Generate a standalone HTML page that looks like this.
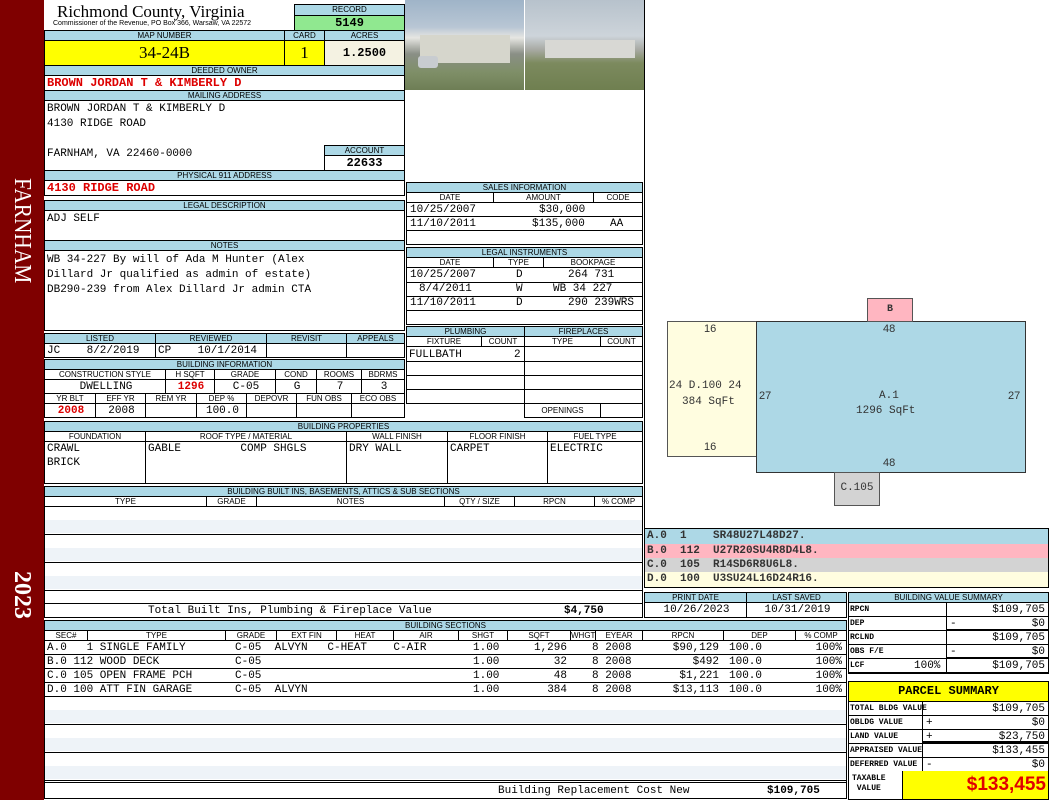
<!DOCTYPE html>
<html><head><meta charset="utf-8"><style>
*{margin:0;padding:0;box-sizing:border-box}
body{width:1050px;height:800px;background:#fff;position:relative;overflow:hidden;font-family:"Liberation Mono",monospace;font-size:11px;color:#000}
.a{position:absolute;border:1px solid #000;overflow:hidden;white-space:nowrap}
.h{background:#acd8e6;font:8px/9px "Liberation Sans",sans-serif;text-align:center}
.m{font:11px/14px "Liberation Mono",monospace;padding-left:2px}
.s{font:8px/9px "Liberation Sans",sans-serif;text-align:center}
.c{text-align:center}.r{text-align:right;padding-right:3px}
.red{color:#d00;font-weight:bold}
.n{position:absolute;white-space:nowrap}
</style></head><body>
<!-- sidebar -->
<div style="position:absolute;left:0;top:0;width:44px;height:800px;background:#7f0000"></div>
<div class="n" style="left:2px;top:178px;width:40px;height:160px;"><div style="transform:rotate(90deg) scaleX(0.89);transform-origin:0 0;position:absolute;left:33px;top:0;font:24px 'Liberation Serif',serif;color:#fff">FARNHAM</div></div>
<div class="n" style="left:2px;top:571px;width:40px;height:60px;"><div style="transform:rotate(90deg);transform-origin:0 0;position:absolute;left:33px;top:0;font:bold 24px 'Liberation Serif',serif;color:#fff">2023</div></div>

<!-- title -->
<div class="n" style="left:57px;top:2px;font:17px 'Liberation Serif',serif">Richmond County, Virginia</div>
<div class="n" style="left:53px;top:20px;font:7px 'Liberation Sans',sans-serif">Commissioner of the Revenue, PO Box 366, Warsaw, VA 22572</div>
<div class="a h" style="left:294px;top:4px;width:111px;height:12px">RECORD</div>
<div class="a c" style="left:294px;top:15px;width:111px;height:16px;background:#90e890;font:bold 12px/14px 'Liberation Mono',monospace">5149</div>

<div class="a h" style="left:44px;top:30px;width:241px;height:11px">MAP NUMBER</div>
<div class="a h" style="left:284px;top:30px;width:41px;height:11px">CARD</div>
<div class="a h" style="left:324px;top:30px;width:81px;height:11px">ACRES</div>
<div class="a c" style="left:44px;top:40px;width:241px;height:26px;background:#ffff00;font:17px/24px 'Liberation Serif',serif">34-24B</div>
<div class="a c" style="left:284px;top:40px;width:41px;height:26px;background:#ffff00;font:17px/24px 'Liberation Serif',serif">1</div>
<div class="a c" style="left:324px;top:40px;width:81px;height:26px;background:#f4f2e2;font:bold 12px/24px 'Liberation Mono',monospace">1.2500</div>

<div class="a h" style="left:44px;top:65px;width:361px;height:11px">DEEDED OWNER</div>
<div class="a m red" style="left:44px;top:75px;width:361px;height:16px;font-size:12px">BROWN JORDAN T &amp; KIMBERLY D</div>
<div class="a h" style="left:44px;top:90px;width:361px;height:11px">MAILING ADDRESS</div>
<div class="a" style="left:44px;top:100px;width:361px;height:71px"></div>
<div class="n m" style="left:45px;top:102px">BROWN JORDAN T &amp; KIMBERLY D</div>
<div class="n m" style="left:45px;top:117px">4130 RIDGE ROAD</div>
<div class="n m" style="left:45px;top:147px">FARNHAM, VA 22460-0000</div>
<div class="a h" style="left:324px;top:145px;width:81px;height:11px">ACCOUNT</div>
<div class="a c" style="left:324px;top:155px;width:81px;height:16px;font:bold 12px/14px 'Liberation Mono',monospace">22633</div>
<div class="a h" style="left:44px;top:170px;width:361px;height:11px">PHYSICAL 911 ADDRESS</div>
<div class="a m red" style="left:44px;top:180px;width:361px;height:16px;font-size:12px">4130 RIDGE ROAD</div>

<div class="a h" style="left:44px;top:200px;width:361px;height:11px">LEGAL DESCRIPTION</div>
<div class="a m" style="left:44px;top:210px;width:361px;height:31px;padding-top:1px">ADJ SELF</div>
<div class="a h" style="left:44px;top:240px;width:361px;height:11px">NOTES</div>
<div class="a m" style="left:44px;top:250px;width:361px;height:81px;padding-top:2px;line-height:15px">WB 34-227 By will of Ada M Hunter (Alex<br>Dillard Jr qualified as admin of estate)<br>DB290-239 from Alex Dillard Jr admin CTA</div>

<!-- listed -->
<div class="a h" style="left:44px;top:333px;width:112px;height:11px">LISTED</div>
<div class="a h" style="left:155px;top:333px;width:112px;height:11px">REVIEWED</div>
<div class="a h" style="left:266px;top:333px;width:81px;height:11px">REVISIT</div>
<div class="a h" style="left:346px;top:333px;width:59px;height:11px">APPEALS</div>
<div class="a m" style="left:44px;top:343px;width:112px;height:15px">JC&nbsp;&nbsp;&nbsp;&nbsp;8/2/2019</div>
<div class="a m" style="left:155px;top:343px;width:112px;height:15px">CP&nbsp;&nbsp;&nbsp;&nbsp;10/1/2014</div>
<div class="a" style="left:266px;top:343px;width:81px;height:15px"></div>
<div class="a" style="left:346px;top:343px;width:59px;height:15px"></div>

<div class="a h" style="left:44px;top:359px;width:361px;height:11px">BUILDING INFORMATION</div>
<div class="a s" style="left:44px;top:369px;width:122px;height:11px">CONSTRUCTION STYLE</div>
<div class="a s" style="left:165px;top:369px;width:50px;height:11px">H SQFT</div>
<div class="a s" style="left:214px;top:369px;width:62px;height:11px">GRADE</div>
<div class="a s" style="left:275px;top:369px;width:42px;height:11px">COND</div>
<div class="a s" style="left:316px;top:369px;width:46px;height:11px">ROOMS</div>
<div class="a s" style="left:361px;top:369px;width:44px;height:11px">BDRMS</div>
<div class="a m c" style="left:44px;top:379px;width:122px;height:15px">DWELLING</div>
<div class="a m c red" style="left:165px;top:379px;width:50px;height:15px">1296</div>
<div class="a m c" style="left:214px;top:379px;width:62px;height:15px">C-05</div>
<div class="a m c" style="left:275px;top:379px;width:42px;height:15px">G</div>
<div class="a m c" style="left:316px;top:379px;width:46px;height:15px">7</div>
<div class="a m c" style="left:361px;top:379px;width:44px;height:15px">3</div>
<div class="a s" style="left:44px;top:393px;width:52px;height:11px">YR BLT</div>
<div class="a s" style="left:95px;top:393px;width:51px;height:11px">EFF YR</div>
<div class="a s" style="left:145px;top:393px;width:52px;height:11px">REM YR</div>
<div class="a s" style="left:196px;top:393px;width:51px;height:11px">DEP %</div>
<div class="a s" style="left:246px;top:393px;width:51px;height:11px">DEPOVR</div>
<div class="a s" style="left:296px;top:393px;width:56px;height:11px">FUN OBS</div>
<div class="a s" style="left:351px;top:393px;width:54px;height:11px">ECO OBS</div>
<div class="a m c red" style="left:44px;top:403px;width:52px;height:15px">2008</div>
<div class="a m c" style="left:95px;top:403px;width:51px;height:15px">2008</div>
<div class="a" style="left:145px;top:403px;width:52px;height:15px"></div>
<div class="a m c" style="left:196px;top:403px;width:51px;height:15px">100.0</div>
<div class="a" style="left:246px;top:403px;width:51px;height:15px"></div>
<div class="a" style="left:296px;top:403px;width:56px;height:15px"></div>
<div class="a" style="left:351px;top:403px;width:54px;height:15px"></div>

<!-- photos -->
<div class="n" style="left:405px;top:0;width:119px;height:90px;background:linear-gradient(#9fb4c8 0,#b8c6d4 30%,#e6e6e2 42%,#8a8f86 60%,#7f8f68 80%,#6e7e55 100%)"></div>
<div class="n" style="left:420px;top:35px;width:90px;height:28px;background:#d6d6cc"></div>
<div class="n" style="left:418px;top:56px;width:20px;height:12px;background:#c8ccd0;border-radius:3px"></div>
<div class="n" style="left:525px;top:0;width:119px;height:90px;background:linear-gradient(#b7c2cc 0,#cdd4da 40%,#a8aaa4 55%,#7c8a5e 70%,#6f7f50 100%)"></div>
<div class="n" style="left:545px;top:40px;width:90px;height:18px;background:#d8d8d4"></div>
<div class="n" style="left:644px;top:0;width:1px;height:530px;background:#000"></div>

<!-- sales -->
<div class="a h" style="left:406px;top:182px;width:237px;height:11px">SALES INFORMATION</div>
<div class="a s" style="left:406px;top:192px;width:88px;height:11px">DATE</div>
<div class="a s" style="left:493px;top:192px;width:101px;height:11px">AMOUNT</div>
<div class="a s" style="left:593px;top:192px;width:50px;height:11px">CODE</div>
<div class="a" style="left:406px;top:202px;width:237px;height:43px"></div>
<div class="n m" style="left:408px;top:203px">10/25/2007</div><div class="n m" style="left:537px;top:203px">$30,000</div>
<div class="n" style="left:407px;top:216px;width:235px;height:1px;background:#000"></div>
<div class="n m" style="left:408px;top:217px">11/10/2011</div><div class="n m" style="left:530px;top:217px">$135,000</div><div class="n m" style="left:608px;top:217px">AA</div>
<div class="n" style="left:407px;top:230px;width:235px;height:1px;background:#000"></div>

<div class="a h" style="left:406px;top:247px;width:237px;height:11px">LEGAL INSTRUMENTS</div>
<div class="a s" style="left:406px;top:257px;width:88px;height:11px">DATE</div>
<div class="a s" style="left:493px;top:257px;width:51px;height:11px">TYPE</div>
<div class="a s" style="left:543px;top:257px;width:100px;height:11px">BOOKPAGE</div>
<div class="a" style="left:406px;top:267px;width:237px;height:58px"></div>
<div class="n m" style="left:408px;top:268px">10/25/2007</div><div class="n m" style="left:514px;top:268px">D</div><div class="n m" style="left:566px;top:268px">264 731</div>
<div class="n" style="left:407px;top:282px;width:235px;height:1px;background:#000"></div>
<div class="n m" style="left:417px;top:282px">8/4/2011</div><div class="n m" style="left:514px;top:282px">W</div><div class="n m" style="left:551px;top:282px">WB 34 227</div>
<div class="n" style="left:407px;top:296px;width:235px;height:1px;background:#000"></div>
<div class="n m" style="left:408px;top:296px">11/10/2011</div><div class="n m" style="left:514px;top:296px">D</div><div class="n m" style="left:566px;top:296px">290 239WRS</div>
<div class="n" style="left:407px;top:310px;width:235px;height:1px;background:#000"></div>

<!-- plumbing/fireplace -->
<div class="a h" style="left:406px;top:326px;width:119px;height:11px">PLUMBING</div>
<div class="a h" style="left:524px;top:326px;width:119px;height:11px">FIREPLACES</div>
<div class="a s" style="left:406px;top:336px;width:76px;height:11px">FIXTURE</div>
<div class="a s" style="left:481px;top:336px;width:44px;height:11px">COUNT</div>
<div class="a s" style="left:524px;top:336px;width:77px;height:11px">TYPE</div>
<div class="a s" style="left:600px;top:336px;width:43px;height:11px">COUNT</div>
<div class="a" style="left:406px;top:346px;width:119px;height:58px"></div>
<div class="n m" style="left:407px;top:348px">FULLBATH</div><div class="n m" style="left:512px;top:348px">2</div>
<div class="n" style="left:407px;top:361px;width:117px;height:1px;background:#000"></div>
<div class="n" style="left:407px;top:375px;width:117px;height:1px;background:#000"></div>
<div class="n" style="left:407px;top:389px;width:117px;height:1px;background:#000"></div>
<div class="a" style="left:524px;top:346px;width:119px;height:58px"></div>
<div class="n" style="left:525px;top:361px;width:117px;height:1px;background:#000"></div>
<div class="n" style="left:525px;top:375px;width:117px;height:1px;background:#000"></div>
<div class="n" style="left:525px;top:389px;width:117px;height:1px;background:#000"></div>
<div class="a s" style="left:524px;top:403px;width:77px;height:15px;line-height:13px">OPENINGS</div>
<div class="a" style="left:600px;top:403px;width:43px;height:15px"></div>

<!-- building properties -->
<div class="a h" style="left:44px;top:421px;width:599px;height:11px">BUILDING PROPERTIES</div>
<div class="a s" style="left:44px;top:431px;width:102px;height:11px">FOUNDATION</div>
<div class="a s" style="left:145px;top:431px;width:202px;height:11px">ROOF TYPE / MATERIAL</div>
<div class="a s" style="left:346px;top:431px;width:102px;height:11px">WALL FINISH</div>
<div class="a s" style="left:447px;top:431px;width:101px;height:11px">FLOOR FINISH</div>
<div class="a s" style="left:547px;top:431px;width:96px;height:11px">FUEL TYPE</div>
<div class="a m" style="left:44px;top:441px;width:102px;height:43px;line-height:14px">CRAWL<br>BRICK</div>
<div class="a m" style="left:145px;top:441px;width:202px;height:43px;line-height:14px">GABLE&nbsp;&nbsp;&nbsp;&nbsp;&nbsp;&nbsp;&nbsp;&nbsp;&nbsp;COMP SHGLS</div>
<div class="a m" style="left:346px;top:441px;width:102px;height:43px;line-height:14px">DRY WALL</div>
<div class="a m" style="left:447px;top:441px;width:101px;height:43px;line-height:14px">CARPET</div>
<div class="a m" style="left:547px;top:441px;width:96px;height:43px;line-height:14px">ELECTRIC</div>

<!-- built ins -->
<div class="a h" style="left:44px;top:486px;width:599px;height:11px">BUILDING BUILT INS, BASEMENTS, ATTICS &amp; SUB SECTIONS</div>
<div class="a s" style="left:44px;top:496px;width:163px;height:11px">TYPE</div>
<div class="a s" style="left:206px;top:496px;width:51px;height:11px">GRADE</div>
<div class="a s" style="left:256px;top:496px;width:189px;height:11px">NOTES</div>
<div class="a s" style="left:444px;top:496px;width:71px;height:11px">QTY / SIZE</div>
<div class="a s" style="left:514px;top:496px;width:81px;height:11px">RPCN</div>
<div class="a s" style="left:594px;top:496px;width:49px;height:11px">% COMP</div>
<div class="a" style="left:44px;top:506px;width:599px;height:112px;background:repeating-linear-gradient(#fff 0,#fff 13px,#000 13px,#000 14px)"></div>
<div class="n" style="left:45px;top:520px;width:597px;height:13px;background:#eef3f8"></div>
<div class="n" style="left:45px;top:548px;width:597px;height:13px;background:#eef3f8"></div>
<div class="n" style="left:45px;top:576px;width:597px;height:13px;background:#eef3f8"></div>
<div class="a" style="left:44px;top:603px;width:599px;height:15px;background:#fff"></div>
<div class="n m" style="left:146px;top:604px">Total Built Ins, Plumbing &amp; Fireplace Value</div>
<div class="n m" style="left:562px;top:604px;font-weight:bold">$4,750</div>

<!-- sketch -->
<div class="n" style="left:667px;top:321px;width:90px;height:136px;background:#fffde0;border:1px solid #555"></div>
<div class="n" style="left:756px;top:321px;width:270px;height:152px;background:#add8e6;border:1px solid #333"></div>
<div class="n" style="left:867px;top:298px;width:46px;height:24px;background:#ffb6c1;border:1px solid #555;font:bold 10px/22px 'Liberation Mono',monospace;text-align:center;color:#333">B</div>
<div class="n" style="left:834px;top:472px;width:46px;height:34px;background:#d3d3d3;border:1px solid #555;font:11px/30px 'Liberation Mono',monospace;text-align:center;color:#333">C.105</div>
<div class="n" style="left:704px;top:323px;font:11px 'Liberation Sans',sans-serif;color:#333">16</div>
<div class="n" style="left:704px;top:441px;font:11px 'Liberation Sans',sans-serif;color:#333">16</div>
<div class="n" style="left:669px;top:380px;font:11px/13px 'Liberation Mono',monospace;color:#333">24 D.100 24</div>
<div class="n" style="left:682px;top:396px;font:11px/13px 'Liberation Mono',monospace;color:#333">384 SqFt</div>
<div class="n" style="left:883px;top:323px;font:11px 'Liberation Sans',sans-serif;color:#333">48</div>
<div class="n" style="left:883px;top:457px;font:11px 'Liberation Sans',sans-serif;color:#333">48</div>
<div class="n" style="left:759px;top:390px;font:11px 'Liberation Sans',sans-serif;color:#333">27</div>
<div class="n" style="left:1008px;top:390px;font:11px 'Liberation Sans',sans-serif;color:#333">27</div>
<div class="n" style="left:879px;top:390px;font:11px/13px 'Liberation Mono',monospace;color:#333">A.1</div>
<div class="n" style="left:856px;top:405px;font:11px/13px 'Liberation Mono',monospace;color:#333">1296 SqFt</div>

<div class="a" style="left:644px;top:528px;width:405px;height:60px"></div>
<div class="n m" style="left:645px;top:529px;width:403px;height:15px;background:#add8e6;font:bold 11px/15px 'Liberation Mono',monospace;color:#333">A.0&nbsp;&nbsp;1&nbsp;&nbsp;&nbsp;&nbsp;SR48U27L48D27.</div>
<div class="n m" style="left:645px;top:544px;width:403px;height:14px;background:#ffb6c1;font:bold 11px/14px 'Liberation Mono',monospace;color:#333">B.0&nbsp;&nbsp;112&nbsp;&nbsp;U27R20SU4R8D4L8.</div>
<div class="n m" style="left:645px;top:558px;width:403px;height:14px;background:#d3d3d3;font:bold 11px/14px 'Liberation Mono',monospace;color:#333">C.0&nbsp;&nbsp;105&nbsp;&nbsp;R14SD6R8U6L8.</div>
<div class="n m" style="left:645px;top:572px;width:403px;height:15px;background:#fffde0;font:bold 11px/15px 'Liberation Mono',monospace;color:#333">D.0&nbsp;&nbsp;100&nbsp;&nbsp;U3SU24L16D24R16.</div>

<!-- print date -->
<div class="a h" style="left:644px;top:592px;width:103px;height:11px">PRINT DATE</div>
<div class="a h" style="left:746px;top:592px;width:101px;height:11px">LAST SAVED</div>
<div class="a m c" style="left:644px;top:602px;width:103px;height:16px">10/26/2023</div>
<div class="a m c" style="left:746px;top:602px;width:101px;height:16px">10/31/2019</div>

<!-- building sections -->
<div class="a h" style="left:44px;top:620px;width:803px;height:11px">BUILDING SECTIONS</div>
<div class="a s" style="left:44px;top:630px;width:44px;height:11px">SEC#</div>
<div class="a s" style="left:87px;top:630px;width:139px;height:11px">TYPE</div>
<div class="a s" style="left:225px;top:630px;width:52px;height:11px">GRADE</div>
<div class="a s" style="left:276px;top:630px;width:61px;height:11px">EXT FIN</div>
<div class="a s" style="left:336px;top:630px;width:58px;height:11px">HEAT</div>
<div class="a s" style="left:393px;top:630px;width:66px;height:11px">AIR</div>
<div class="a s" style="left:458px;top:630px;width:50px;height:11px">SHGT</div>
<div class="a s" style="left:507px;top:630px;width:64px;height:11px">SQFT</div>
<div class="a s" style="left:570px;top:630px;width:26px;height:11px">WHGT</div>
<div class="a s" style="left:595px;top:630px;width:48px;height:11px">EYEAR</div>
<div class="a s" style="left:642px;top:630px;width:82px;height:11px">RPCN</div>
<div class="a s" style="left:723px;top:630px;width:73px;height:11px">DEP</div>
<div class="a s" style="left:795px;top:630px;width:52px;height:11px">% COMP</div>
<div class="a" style="left:44px;top:640px;width:803px;height:159px;background:repeating-linear-gradient(#fff 0,#fff 13px,#000 13px,#000 14px)"></div>
<div class="n" style="left:45px;top:710px;width:801px;height:13px;background:#eef3f8"></div>
<div class="n" style="left:45px;top:738px;width:801px;height:13px;background:#eef3f8"></div>
<div class="n" style="left:45px;top:766px;width:801px;height:13px;background:#eef3f8"></div>
<div class="n" style="left:45px;top:782px;width:801px;height:16px;background:#fff;border-top:1px solid #000"></div>
<div class="n m" style="left:45px;top:641px">A.0&nbsp;&nbsp;&nbsp;1 SINGLE FAMILY</div>
<div class="n m" style="left:45px;top:655px">B.0&nbsp;112 WOOD DECK</div>
<div class="n m" style="left:45px;top:669px">C.0&nbsp;105 OPEN FRAME PCH</div>
<div class="n m" style="left:45px;top:683px">D.0&nbsp;100 ATT FIN GARAGE</div>
<div class="n m" style="left:233px;top:641px">C-05&nbsp;&nbsp;ALVYN&nbsp;&nbsp;&nbsp;C-HEAT&nbsp;&nbsp;&nbsp;&nbsp;C-AIR</div>
<div class="n m" style="left:233px;top:655px">C-05</div>
<div class="n m" style="left:233px;top:669px">C-05</div>
<div class="n m" style="left:233px;top:683px">C-05&nbsp;&nbsp;ALVYN</div>
<div class="n m" style="left:471px;top:641px">1.00</div><div class="n m" style="left:471px;top:655px">1.00</div><div class="n m" style="left:471px;top:669px">1.00</div><div class="n m" style="left:471px;top:683px">1.00</div>
<div class="n m r" style="left:500px;top:641px;width:70px">1,296</div><div class="n m r" style="left:500px;top:655px;width:70px">32</div><div class="n m r" style="left:500px;top:669px;width:70px">48</div><div class="n m r" style="left:500px;top:683px;width:70px">384</div>
<div class="n m" style="left:590px;top:641px">8 2008</div><div class="n m" style="left:590px;top:655px">8 2008</div><div class="n m" style="left:590px;top:669px">8 2008</div><div class="n m" style="left:590px;top:683px">8 2008</div>
<div class="n m r" style="left:640px;top:641px;width:82px">$90,129</div><div class="n m r" style="left:640px;top:655px;width:82px">$492</div><div class="n m r" style="left:640px;top:669px;width:82px">$1,221</div><div class="n m r" style="left:640px;top:683px;width:82px">$13,113</div>
<div class="n m" style="left:727px;top:641px">100.0</div><div class="n m" style="left:727px;top:655px">100.0</div><div class="n m" style="left:727px;top:669px">100.0</div><div class="n m" style="left:727px;top:683px">100.0</div>
<div class="n m r" style="left:790px;top:641px;width:55px">100%</div><div class="n m r" style="left:790px;top:655px;width:55px">100%</div><div class="n m r" style="left:790px;top:669px;width:55px">100%</div><div class="n m r" style="left:790px;top:683px;width:55px">100%</div>
<div class="n m" style="left:496px;top:784px">Building Replacement Cost New</div>
<div class="n m" style="left:765px;top:784px;font-weight:bold">$109,705</div>

<!-- building value summary -->
<div class="a h" style="left:848px;top:592px;width:201px;height:11px">BUILDING VALUE SUMMARY</div>
<div class="a" style="left:848px;top:602px;width:201px;height:72px;background:repeating-linear-gradient(#fff 0,#fff 13px,#000 13px,#000 14px)"></div>
<div class="n" style="left:946px;top:602px;width:1px;height:72px;background:#000"></div>
<div class="n" style="left:947px;top:629px;width:101px;height:2px;background:#000"></div>
<div class="n" style="left:947px;top:657px;width:101px;height:2px;background:#000"></div>
<div class="n" style="left:850px;top:605px;font:bold 8px 'Liberation Mono',monospace">RPCN</div><div class="n m r" style="left:948px;top:603px;width:100px">$109,705</div>
<div class="n" style="left:850px;top:619px;font:bold 8px 'Liberation Mono',monospace">DEP</div><div class="n m" style="left:948px;top:617px;width:100px">-</div><div class="n m r" style="left:948px;top:617px;width:100px">$0</div>
<div class="n" style="left:850px;top:633px;font:bold 8px 'Liberation Mono',monospace">RCLND</div><div class="n m r" style="left:948px;top:631px;width:100px">$109,705</div>
<div class="n" style="left:850px;top:647px;font:bold 8px 'Liberation Mono',monospace">OBS F/E</div><div class="n m" style="left:948px;top:645px;width:100px">-</div><div class="n m r" style="left:948px;top:645px;width:100px">$0</div>
<div class="n" style="left:850px;top:661px;font:bold 8px 'Liberation Mono',monospace">LCF</div><div class="n m" style="left:912px;top:659px">100%</div><div class="n m r" style="left:948px;top:659px;width:100px">$109,705</div>

<!-- parcel summary -->
<div class="a" style="left:848px;top:681px;width:201px;height:21px;background:#ffff00;font:bold 12px/19px 'Liberation Mono',monospace;text-align:center">PARCEL SUMMARY</div>
<div class="a" style="left:848px;top:701px;width:201px;height:99px;background:repeating-linear-gradient(#fff 0,#fff 13px,#000 13px,#000 14px)"></div>
<div class="n" style="left:922px;top:701px;width:1px;height:70px;background:#000"></div>
<div class="n" style="left:923px;top:741px;width:125px;height:2px;background:#000"></div>
<div class="n" style="left:850px;top:704px;font:bold 8px 'Liberation Mono',monospace">TOTAL BLDG VALUE</div><div class="n m r" style="left:924px;top:702px;width:124px">$109,705</div>
<div class="n" style="left:850px;top:718px;font:bold 8px 'Liberation Mono',monospace">OBLDG VALUE</div><div class="n m" style="left:924px;top:716px">+</div><div class="n m r" style="left:924px;top:716px;width:124px">$0</div>
<div class="n" style="left:850px;top:732px;font:bold 8px 'Liberation Mono',monospace">LAND VALUE</div><div class="n m" style="left:924px;top:730px">+</div><div class="n m r" style="left:924px;top:730px;width:124px">$23,750</div>
<div class="n" style="left:850px;top:746px;font:bold 8px 'Liberation Mono',monospace">APPRAISED VALUE</div><div class="n m r" style="left:924px;top:744px;width:124px">$133,455</div>
<div class="n" style="left:850px;top:760px;font:bold 8px 'Liberation Mono',monospace">DEFERRED VALUE</div><div class="n m" style="left:924px;top:758px">-</div><div class="n m r" style="left:924px;top:758px;width:124px">$0</div>
<div class="n" style="left:849px;top:771px;width:199px;height:28px;background:#fff"></div>
<div class="n" style="left:902px;top:771px;width:146px;height:28px;background:#ffff00;border-left:1px solid #000"></div>
<div class="n" style="left:852px;top:774px;font:bold 8px/10px 'Liberation Mono',monospace;text-align:center">TAXABLE<br>VALUE</div>
<div class="n" style="left:902px;top:772px;width:144px;text-align:right;font:bold 19px/26px 'Liberation Sans',sans-serif;color:#e00000">$133,455</div>
</body></html>
